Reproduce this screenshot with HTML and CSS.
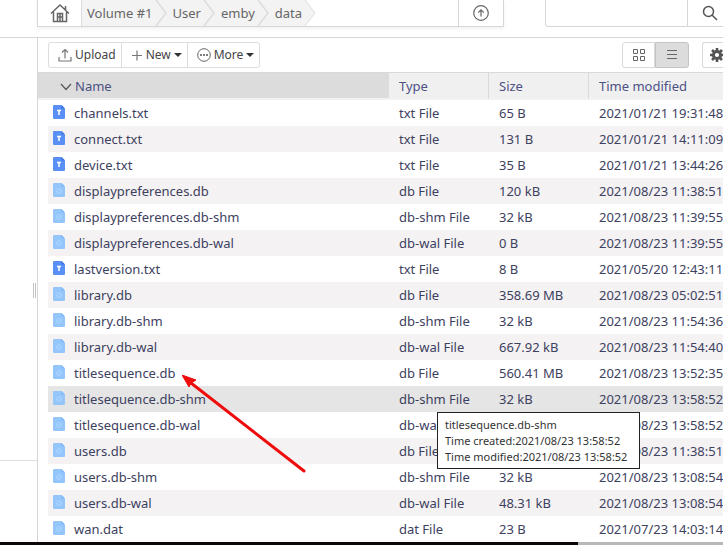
FILE: index.html
```
<!DOCTYPE html>
<html lang="en">
<head>
  <meta charset="UTF-8" />
  <meta name="viewport" content="width=device-width, initial-scale=1.0"/>
  <title>File Manager - data</title>
  <link rel="stylesheet" href="styles.css">
</head>
<body>
  <!-- Shared icons -->
  <svg class="sprite" aria-hidden="true">
    <symbol id="icon-txt" viewBox="0 0 12 14">
      <path d="M1 0h7.500l3.500 3.500V13a1 1 0 0 1-1 1H1a1 1 0 0 1-1-1V1a1 1 0 0 1 1-1z" fill="#5a90f5"/>
      <path d="M8.500 0L12 3.500H8.500z" fill="#3d74e0"/>
      <path d="M4 5.500h4M6 5.500V10" fill="none" stroke="#fff" stroke-width="1.500"/>
    </symbol>
    <symbol id="icon-db" viewBox="0 0 12 14">
      <path d="M1 0h7.500l3.500 3.500V13a1 1 0 0 1-1 1H1a1 1 0 0 1-1-1V1a1 1 0 0 1 1-1z" fill="#94c6fc"/>
      <path d="M8.500 0L12 3.500H8.500z" fill="#7fbafa"/>
      <circle cx="6" cy="8" r="2.500" fill="none" stroke="#a9d3ff"/>
      <path d="M3 9l4-2.500v3z" fill="none" stroke="#a9d3ff" stroke-width=".7"/>
    </symbol>
    <symbol id="icon-chevron" viewBox="0 0 13 26">
      <path d="M1 0l10 13L1 26" fill="none" stroke="#dcdcdc" stroke-width="1.500"/>
    </symbol>
  </svg>

  <div class="window">
    <header class="topbar">
      <nav class="path" aria-label="Path">
        <a class="home" href="#" aria-label="Home">
          <svg width="20" height="20" viewBox="0 0 20 20"><g fill="none" stroke="#666" stroke-width="1.500"><path d="M1 10.500L10 2l9 8.500M3.500 9v9.500h13V9M7.500 18V10.500h5V18M10 10.500V18M7.500 14h5M15.500 3v4"/></g></svg>
        </a>
        <div class="crumbs">
          <a href="#">Volume #1</a>
          <svg class="chevron"><use href="#icon-chevron"/></svg>
          <a href="#">User</a>
          <svg class="chevron"><use href="#icon-chevron"/></svg>
          <a href="#">emby</a>
          <svg class="chevron"><use href="#icon-chevron"/></svg>
          <a href="#">data</a>
          <svg class="chevron" viewBox="0 0 13 26"><path d="M1 0l10 13L1 26h12V0z" fill="#fff"/><path d="M1 0l10 13L1 26" fill="none" stroke="#ddd"/></svg>
        </div>
        <button class="up" aria-label="Up one level">
          <svg width="16" height="16" viewBox="0 0 16 16" fill="none" stroke="#666" stroke-width="1.200"><circle cx="8" cy="8" r="7.300"/><path d="M8 11.500V5M5.200 7.600L8 4.800l2.800 2.800"/></svg>
        </button>
      </nav>
      <div class="search">
        <input type="text" aria-label="Search">
        <button aria-label="Search">
          <svg width="16" height="16" viewBox="0 0 16 16" fill="none" stroke="#555" stroke-width="1.500"><circle cx="6.500" cy="6.500" r="5"/><path d="M10 10l5 5"/></svg>
        </button>
      </div>
    </header>

    <div class="main">
      <aside class="sidebar">
        <div class="tree"></div>
        <span class="handle"></span>
      </aside>

      <main class="content">
        <div class="toolbar">
          <div class="group">
            <button>
              <svg width="14" height="14" viewBox="0 0 14 14" fill="none" stroke="#777" stroke-width="1.200"><path d="M1 9v4h12V9M7 10.500V2M4 4.500l3-3 3 3"/></svg>
              Upload
            </button>
            <button>
              <svg width="12" height="12" viewBox="0 0 12 12" stroke="#777" stroke-width="1.200"><path d="M1 6.500h10M6 1.500v10"/></svg>
              New<span class="caret"></span>
            </button>
            <button>
              <svg width="14" height="14" viewBox="0 0 14 14"><circle cx="7" cy="7" r="6.300" fill="none" stroke="#666"/><path d="M3 7h2M6 7h2M9 7h2" stroke="#555" stroke-width="1.500"/></svg>
              More<span class="caret"></span>
            </button>
          </div>
          <div class="views">
            <button aria-label="Grid view">
              <svg width="12" height="12" viewBox="0 0 12 12" fill="none" stroke="#666"><path d="M.5.500h4v4h-4zM7.500.500h4v4h-4zM.5 7.500h4v4h-4zM7.500 7.500h4v4h-4z"/></svg>
            </button>
            <button class="active" aria-label="List view">
              <svg width="10" height="10" viewBox="0 0 10 10" stroke="#666"><path d="M0 .5h10M0 4.500h10M0 8.500h10"/></svg>
            </button>
          </div>
          <button class="settings" aria-label="Settings">
            <svg width="14" height="14" viewBox="0 0 14 14"><circle cx="7" cy="7" r="3.600" fill="none" stroke="#555" stroke-width="3"/><path d="M7 0v3M7 11v3M0 7h3M11 7h3M2 2l2 2M10 10l2 2M12 2l-2 2M4 10l-2 2" stroke="#555" stroke-width="2.600"/></svg>
          </button>
        </div>

        <table class="files">
          <thead>
            <tr>
              <th class="name sorted"><svg width="12" height="8" viewBox="0 0 12 8" fill="none" stroke="#555" stroke-width="1.200"><path d="M1 1l5 5.500L11 1"/></svg>Name</th>
              <th class="type">Type</th>
              <th class="size">Size</th>
              <th class="time">Time modified</th>
            </tr>
          </thead>
          <tbody>
            <tr><td><svg class="icon"><use href="#icon-txt"/></svg>channels.txt</td><td>txt File</td><td>65 B</td><td>2021/01/21 19:31:48</td></tr>
            <tr><td><svg class="icon"><use href="#icon-txt"/></svg>connect.txt</td><td>txt File</td><td>131 B</td><td>2021/01/21 14:11:09</td></tr>
            <tr><td><svg class="icon"><use href="#icon-txt"/></svg>device.txt</td><td>txt File</td><td>35 B</td><td>2021/01/21 13:44:26</td></tr>
            <tr><td><svg class="icon"><use href="#icon-db"/></svg>displaypreferences.db</td><td>db File</td><td>120 kB</td><td>2021/08/23 11:38:51</td></tr>
            <tr><td><svg class="icon"><use href="#icon-db"/></svg>displaypreferences.db-shm</td><td>db-shm File</td><td>32 kB</td><td>2021/08/23 11:39:55</td></tr>
            <tr><td><svg class="icon"><use href="#icon-db"/></svg>displaypreferences.db-wal</td><td>db-wal File</td><td>0 B</td><td>2021/08/23 11:39:55</td></tr>
            <tr><td><svg class="icon"><use href="#icon-txt"/></svg>lastversion.txt</td><td>txt File</td><td>8 B</td><td>2021/05/20 12:43:11</td></tr>
            <tr><td><svg class="icon"><use href="#icon-db"/></svg>library.db</td><td>db File</td><td>358.69 MB</td><td>2021/08/23 05:02:51</td></tr>
            <tr><td><svg class="icon"><use href="#icon-db"/></svg>library.db-shm</td><td>db-shm File</td><td>32 kB</td><td>2021/08/23 11:54:36</td></tr>
            <tr><td><svg class="icon"><use href="#icon-db"/></svg>library.db-wal</td><td>db-wal File</td><td>667.92 kB</td><td>2021/08/23 11:54:40</td></tr>
            <tr><td><svg class="icon"><use href="#icon-db"/></svg>titlesequence.db</td><td>db File</td><td>560.41 MB</td><td>2021/08/23 13:52:35</td></tr>
            <tr class="hover"><td><svg class="icon"><use href="#icon-db"/></svg>titlesequence.db-shm</td><td>db-shm File</td><td>32 kB</td><td>2021/08/23 13:58:52</td></tr>
            <tr><td><svg class="icon"><use href="#icon-db"/></svg>titlesequence.db-wal</td><td>db-wal File</td><td></td><td>2021/08/23 13:58:52</td></tr>
            <tr><td><svg class="icon"><use href="#icon-db"/></svg>users.db</td><td>db File</td><td></td><td>2021/08/23 11:38:51</td></tr>
            <tr><td><svg class="icon"><use href="#icon-db"/></svg>users.db-shm</td><td>db-shm File</td><td>32 kB</td><td>2021/08/23 13:08:54</td></tr>
            <tr><td><svg class="icon"><use href="#icon-db"/></svg>users.db-wal</td><td>db-wal File</td><td>48.31 kB</td><td>2021/08/23 13:08:54</td></tr>
            <tr><td><svg class="icon"><use href="#icon-db"/></svg>wan.dat</td><td>dat File</td><td>23 B</td><td>2021/07/23 14:03:14</td></tr>
          </tbody>
        </table>
      </main>
    </div>
  </div>
  <div class="desktop"></div>

  <!-- Red pointer arrow -->
  <svg class="arrow" width="126" height="100" viewBox="0 0 126 100">
    <path d="M9 8L122 96" stroke="#ee0c0c" stroke-width="3" stroke-linecap="round"/>
    <path d="M0 0L14 5L9 8L7 12z" fill="#ee0c0c" stroke="#ee0c0c" stroke-width="1"/>
  </svg>

  <div class="tooltip" role="tooltip">
    titlesequence.db-shm<br>
    Time created:2021/08/23 13:58:52<br>
    Time modified:2021/08/23 13:58:52
  </div>
</body>
</html>
```
FILE: styles.css
```
/* General page styles */
* {
  box-sizing: border-box;
}
body, html {
  margin: 0;
  padding: 0;
  height: 100%;
  overflow: hidden;
}
body {
  background: #fff;
  color: #3d4160;
  font-family: "Noto Sans", "Open Sans", sans-serif;
  font-size: 13px;
  line-height: 18px;
}
button, input {
  margin: 0;
  padding: 0;
  border: none;
  background: none;
  font: inherit;
  color: inherit;
}
a {
  color: inherit;
  text-decoration: none;
}
svg {
  flex: none;
}
.sprite {
  position: absolute;
  width: 0;
  height: 0;
}
/* Top bar with path and search */
.topbar {
  display: flex;
  gap: 41px;
  height: 38px;
  padding-left: 37px;
  padding-bottom: 10px;
  border-bottom: 1px solid #d6d6d6;
  color: #666;
}
.path {
  display: flex;
  flex: none;
  width: 467px;
  border: 1px solid #d6d6d6;
  border-top: none;
  box-shadow: 0 2px 4px #f2f2f2;
}
.home {
  display: flex;
  align-items: center;
  justify-content: center;
  width: 44px;
  border-right: 1px solid #ddd;
}
.crumbs {
  display: flex;
  align-items: center;
  background: #f3f3f3;
  margin-right: auto;
}
.crumbs a {
  padding: 0 2px 0 5px;
}
.chevron {
  width: 13px;
  height: 26px;
}
.up {
  width: 45px;
  border-left: 1px solid #d6d6d6;
}
.path .up,
.search button {
  display: flex;
  align-items: center;
  justify-content: center;
}
.search {
  flex: 1;
  display: flex;
  min-width: 188px;
  border: 1px solid #d6d6d6;
  border-top: none;
  border-radius: 0 0 3px 3px;
}
.search input {
  flex: 1;
  min-width: 0;
}
.search button {
  width: 45px;
  border-left: 1px solid #d6d6d6;
}
/* Sidebar */
.main {
  display: flex;
}
.sidebar {
  display: flex;
  flex: none;
  position: relative;
  width: 38px;
  border-right: 1px solid #d6d6d6;
}
.tree {
  flex: 1;
  margin-bottom: 81px;
  border-bottom: 1px solid #ddd;
}
.handle {
  position: absolute;
  right: 1px;
  top: 245px;
  width: 3px;
  height: 15px;
  border: 1px solid #c4c4c4;
  border-width: 0 1px;
}
/* Toolbar */
.content {
  flex: 1;
  min-width: 0;
  overflow: hidden;
}
.toolbar {
  display: flex;
  align-items: center;
  height: 34px;
  padding-left: 10px;
  color: #444;
  font-size: 12px;
}
.group {
  display: flex;
  height: 26px;
  margin-right: auto;
  border: 1px solid #ddd;
  border-radius: 3px;
}
.group button {
  display: flex;
  align-items: center;
  gap: 3px;
  padding: 0 5px 0 9px;
}
.group button + button {
  border-left: 1px solid #ddd;
}
.caret {
  border: 4px solid transparent;
  border-top-color: #333;
  border-bottom: none;
}
.views {
  display: flex;
  height: 26px;
  margin-right: 13px;
}
.views button {
  display: flex;
  align-items: center;
  justify-content: center;
  width: 33px;
  border: 1px solid #d9d9d9;
  border-radius: 3px 0 0 3px;
}
.views .active {
  width: 34px;
  background: #dcdcdc;
  border-color: #c4c4c4;
  border-radius: 0 3px 3px 0;
}
.settings {
  display: flex;
  align-items: center;
  width: 21px;
  height: 26px;
  padding-left: 7px;
  border: 1px solid #d9d9d9;
  border-right: none;
  border-radius: 3px 0 0 3px;
}
/* File list */
.files {
  width: 100%;
  min-width: 700px;
  table-layout: fixed;
  border-collapse: separate;
  border-spacing: 0;
  white-space: nowrap;
}
.files th {
  height: 28px;
  padding: 0 10px;
  background: #f0f0f0;
  border-top: 1px solid #d9d9d9;
  border-bottom: 2px solid #f3f1f2;
  color: #4c5184;
  font-weight: normal;
  text-align: left;
}
.files .sorted {
  padding-left: 22px;
  background: #dcdcdc;
}
.sorted svg {
  margin-right: 3px;
}
.name {
  width: 351px;
}
.type, .size {
  width: 100px;
}
.files .type, .files .size {
  border-right: 1px solid #d9d9d9;
}
.files td {
  height: 26px;
  padding: 0 10px;
}
.files td:first-child {
  border-left: 10px solid #fff;
  padding-left: 5px;
}
.files tr:nth-child(even) td {
  background: #f4f2f3;
}
.files tr.hover td {
  background: #e5e5e5;
}
.icon {
  width: 12px;
  height: 14px;
  margin-right: 9px;
  vertical-align: -1px;
}
/* Strip of desktop under the window */
.desktop {
  height: 3px;
  background: linear-gradient(to right, #0c0607 80%, #b8b8b8 80%);
}
/* Things lying over the list */
.arrow {
  position: absolute;
  left: 182px;
  top: 375px;
}
.tooltip {
  position: absolute;
  left: 437px;
  top: 412px;
  padding: 4px 12px 3px 7px;
  background: #fff;
  border: 1px solid #222;
  color: #333;
  font-size: 11px;
  line-height: 16px;
  white-space: nowrap;
}
```
